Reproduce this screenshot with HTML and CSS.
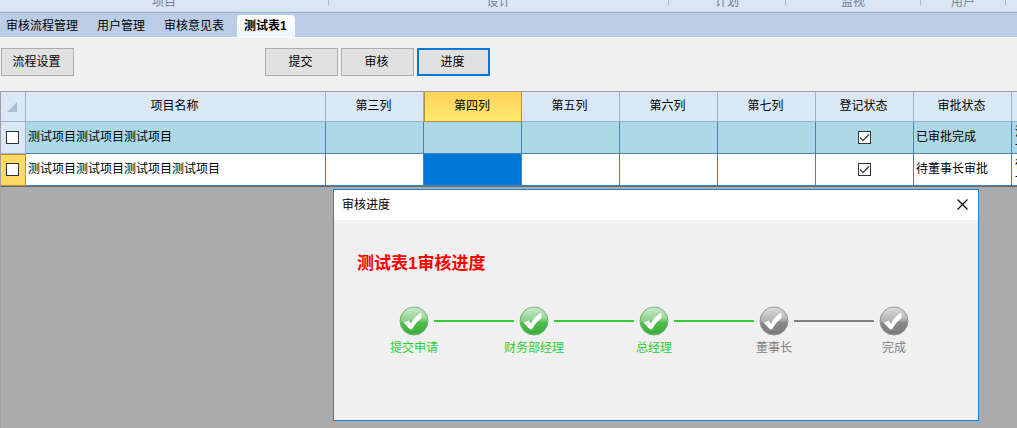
FILE: index.html
```html
<!DOCTYPE html>
<html lang="zh-CN">
<head>
    <meta charset="UTF-8">
    <meta name="viewport" content="width=device-width, initial-scale=1.0">
    <title>测试表1</title>
    <link rel="stylesheet" href="styles.css">
</head>
<body>
    <svg class="defs" aria-hidden="true">
        <defs>
            <linearGradient id="ballGreen" x1="0" y1="0" x2="0" y2="1">
                <stop offset="0" stop-color="#a9dba6"/>
                <stop offset="0.5" stop-color="#74c970"/>
                <stop offset="0.55" stop-color="#4fba4e"/>
                <stop offset="1" stop-color="#35b03a"/>
            </linearGradient>
            <linearGradient id="ballGray" x1="0" y1="0" x2="0" y2="1">
                <stop offset="0" stop-color="#c6c6c6"/>
                <stop offset="0.5" stop-color="#a4a4a4"/>
                <stop offset="0.55" stop-color="#8a8a8a"/>
                <stop offset="1" stop-color="#787878"/>
            </linearGradient>
            <linearGradient id="shine" x1="0" y1="0" x2="0" y2="1">
                <stop offset="0" stop-color="#fff" stop-opacity="0.4"/>
                <stop offset="1" stop-color="#fff" stop-opacity="0.1"/>
            </linearGradient>
            <g id="tick">
                <path d="M2 16A13 13 0 0 1 28 13Q19 13 14 16Q8 19 2 16Z" fill="url(#shine)"/>
                <path d="M4.5 16.5L9.5 14.5L12 17.5Q15 11 22.5 6.5V12Q17 16 13 23.5H11Z" fill="#fff"/>
            </g>
        </defs>
    </svg>

    <div class="ribbon">
        <span class="ribbon-group g-project">项目</span>
        <span class="ribbon-group g-design">设计</span>
        <span class="ribbon-group g-plan">计划</span>
        <span class="ribbon-group g-monitor">监视</span>
        <span class="ribbon-group g-user">用户</span>
    </div>

    <nav class="tabs">
        <a class="tab" href="#">审核流程管理</a>
        <a class="tab" href="#">用户管理</a>
        <a class="tab" href="#">审核意见表</a>
        <a class="tab active" href="#">测试表1</a>
    </nav>

    <div class="toolbar">
        <button type="button" class="btn btn-setup">流程设置</button>
        <button type="button" class="btn">提交</button>
        <button type="button" class="btn">审核</button>
        <button type="button" class="btn focused">进度</button>
    </div>

    <main class="workspace">
        <table class="grid">
            <colgroup>
                <col class="c-select">
                <col class="c-name">
                <col span="8" class="c-normal">
            </colgroup>
            <thead>
                <tr>
                    <th><svg class="corner" viewBox="0 0 10 10" aria-hidden="true"><path d="M10 0V10H0Z" fill="#a9bcd8"/></svg></th>
                    <th>项目名称</th>
                    <th>第三列</th>
                    <th class="current">第四列</th>
                    <th>第五列</th>
                    <th>第六列</th>
                    <th>第七列</th>
                    <th>登记状态</th>
                    <th>审批状态</th>
                    <th></th>
                </tr>
            </thead>
            <tbody>
                <tr class="done">
                    <th><input type="checkbox" class="check" aria-label="选择第1行"></th>
                    <td>测试项目测试项目测试项目</td>
                    <td></td>
                    <td></td>
                    <td></td>
                    <td></td>
                    <td></td>
                    <td class="center"><input type="checkbox" class="check" aria-label="登记状态" checked></td>
                    <td>已审批完成</td>
                    <td class="note">流<br>一</td>
                </tr>
                <tr>
                    <th class="current-row"><input type="checkbox" class="check" aria-label="选择第2行"></th>
                    <td>测试项目测试项目测试项目测试项目</td>
                    <td></td>
                    <td class="selected"></td>
                    <td></td>
                    <td></td>
                    <td></td>
                    <td class="center"><input type="checkbox" class="check" aria-label="登记状态" checked></td>
                    <td>待董事长审批</td>
                    <td class="note">待<br>一</td>
                </tr>
            </tbody>
        </table>

        <section class="dialog" role="dialog" aria-labelledby="dialogTitle">
            <header class="dialog-bar">
                <span id="dialogTitle">审核进度</span>
                <button type="button" class="close" aria-label="关闭">
                    <svg viewBox="0 0 11 11" width="11" height="11"><path d="M0.5 0.5L10.5 10.5M10.5 0.5L0.5 10.5" stroke="#000" stroke-width="1.2"/></svg>
                </button>
            </header>
            <div class="dialog-body">
                <h1>测试表1审核进度</h1>
                <ol class="steps">
                    <li class="step passed">
                        <div class="track"><svg class="ball" viewBox="0 0 30 30"><circle cx="15" cy="15" r="14" fill="url(#ballGreen)" stroke="#74b376"/><use href="#tick"/></svg></div>
                        <span>提交申请</span>
                    </li>
                    <li class="step passed">
                        <div class="track"><svg class="ball" viewBox="0 0 30 30"><circle cx="15" cy="15" r="14" fill="url(#ballGreen)" stroke="#74b376"/><use href="#tick"/></svg></div>
                        <span>财务部经理</span>
                    </li>
                    <li class="step passed">
                        <div class="track"><svg class="ball" viewBox="0 0 30 30"><circle cx="15" cy="15" r="14" fill="url(#ballGreen)" stroke="#74b376"/><use href="#tick"/></svg></div>
                        <span>总经理</span>
                    </li>
                    <li class="step">
                        <div class="track"><svg class="ball" viewBox="0 0 30 30"><circle cx="15" cy="15" r="14" fill="url(#ballGray)" stroke="#949494"/><use href="#tick"/></svg></div>
                        <span>董事长</span>
                    </li>
                    <li class="step">
                        <div class="track"><svg class="ball" viewBox="0 0 30 30"><circle cx="15" cy="15" r="14" fill="url(#ballGray)" stroke="#949494"/><use href="#tick"/></svg></div>
                        <span>完成</span>
                    </li>
                </ol>
            </div>
        </section>
    </main>
</body>
</html>
```
FILE: styles.css
```css
* {
    box-sizing: border-box;
}
body {
    margin: 0;
    height: 100vh;
    display: flex;
    flex-direction: column;
    overflow: hidden;
    background: #ababab;
    color: #000;
    font-family: "Liberation Sans", "Noto Sans CJK SC", sans-serif;
    font-size: 12px;
    line-height: 16px;
}
button {
    font: inherit;
    color: inherit;
}
.defs {
    position: absolute;
    width: 0;
    height: 0;
}

/* ribbon */
.ribbon {
    flex: none;
    display: flex;
    height: 13px;
    overflow: hidden;
    background: #dbe6f4;
    border-bottom: 1px solid #9fafc9;
    box-shadow: inset 0 -1px #cddcec;
    color: #72809c;
}
.ribbon-group {
    height: 5px;
    border-right: 1px solid #a9b9d2;
    line-height: 4px;
    text-align: center;
}
.g-project {
    width: 329px;
}
.g-design {
    width: 340px;
}
.g-plan {
    width: 117px;
}
.g-monitor {
    width: 135px;
}
.g-user {
    width: 85px;
}

/* tabs */
.tabs {
    flex: none;
    display: flex;
    align-items: flex-end;
    height: 25px;
    background: #bbcde6;
    border-bottom: 1px solid #f6f9fd;
}
.tab {
    height: 22px;
    padding: 3px 13px 0 6px;
    line-height: 16px;
    color: #000;
    text-decoration: none;
}
.tab.active {
    padding: 2px 7px 0 6px;
    background: linear-gradient(#fff, #eff4fc);
    border: 1px solid #f6f9fd;
    border-radius: 3px 3px 0 0;
    font-weight: bold;
}

/* toolbar */
.toolbar {
    flex: none;
    display: flex;
    gap: 3px;
    height: 53px;
    padding: 10px 1px;
    background: #f0f0f0;
}
.btn {
    width: 73px;
    height: 28px;
    padding: 0 2px 0 0;
    background: #e1e1e1;
    border: 1px solid #adadad;
}
.btn-setup {
    margin-right: 188px;
}
.btn.focused {
    border: 2px solid #0078d7;
}

/* data grid */
.workspace {
    flex: 1;
    position: relative;
    overflow: hidden;
    border-top: 1px solid #a0a0a0;
    border-left: 1px solid #a0a0a0;
}
.grid {
    width: 1109px;
    table-layout: fixed;
    border-collapse: separate;
    border-spacing: 0;
    border-bottom: 1px solid #696969;
    background: #fff;
}
.c-select {
    width: 25px;
}
.c-name {
    width: 300px;
}
.c-normal {
    width: 98px;
}
.grid th {
    height: 30px;
    padding: 0 2px 2px 0;
    background: #dae7f5;
    border-right: 1px solid #9eb0cc;
    border-bottom: 1px solid #9eb0cc;
    font-weight: normal;
    text-align: center;
}
.grid td {
    height: 32px;
    padding: 0 3px 2px 2px;
    border-right: 1px solid #4682b4;
    border-bottom: 1px solid #4682b4;
}
.grid .done td {
    background: #add8e6;
}
.grid td.center {
    text-align: center;
}
.grid td.selected {
    background: #0078d7;
}
.grid th.current {
    background: linear-gradient(#ffd158, #ffec70);
    border-right-color: #c08b36;
    border-bottom-color: #c08b36;
    border-left: 1px solid #c08b36;
}
.grid th.current-row {
    padding-bottom: 3px;
    background: #ffd962;
    border-right-color: #c08b36;
    border-bottom-color: #c08b36;
    border-top: 1px solid #c08b36;
}
.grid td.note {
    padding: 2px 3px 0;
    line-height: 14px;
}
.corner {
    display: block;
    width: 10px;
    height: 10px;
    margin: 2px 0 0 6px;
}
.check {
    appearance: none;
    display: block;
    width: 13px;
    height: 13px;
    margin: 2px auto 0;
    background: #fff;
    border: 1px solid #333;
}
.check:checked {
    background: #fff url("data:image/svg+xml,%3Csvg xmlns='http://www.w3.org/2000/svg' viewBox='0 0 11 11'%3E%3Cpath d='M1 5.5L4 8.5L10 2.5' fill='none' stroke='%23444' stroke-width='1.3'/%3E%3C/svg%3E") center / 11px 11px no-repeat;
}

/* progress window */
.dialog {
    position: absolute;
    top: 97px;
    left: 332px;
    width: 646px;
    background: #f0f0f0;
    border: 1px solid #1883d7;
}
.dialog-bar {
    display: flex;
    align-items: center;
    justify-content: space-between;
    height: 30px;
    padding: 0 10px 0 8px;
    background: #fff;
}
.close {
    display: flex;
    margin-bottom: 2px;
    padding: 0;
    background: none;
    border: none;
}
.dialog-body {
    padding: 32px 20px 64px;
}
.dialog-body h1 {
    margin: 0 0 30px 3px;
    color: #f00;
    font-size: 17px;
    font-weight: bold;
    line-height: 24px;
}
.steps {
    display: grid;
    grid-template-columns: repeat(5, 120px);
    margin: 0;
    padding: 0;
    list-style: none;
}
.step {
    color: #808080;
    text-align: center;
}
.step.passed {
    color: #32cd32;
}
.track {
    display: flex;
    align-items: center;
    gap: 5px;
    margin-bottom: 4px;
}
.track::before,
.track::after {
    content: "";
    flex: 1;
    height: 2px;
    background: currentColor;
}
.passed + .step .track::before {
    background: #32cd32;
}
.step:first-child .track::before,
.step:last-child .track::after {
    visibility: hidden;
}
.ball {
    width: 30px;
    height: 30px;
}
```
